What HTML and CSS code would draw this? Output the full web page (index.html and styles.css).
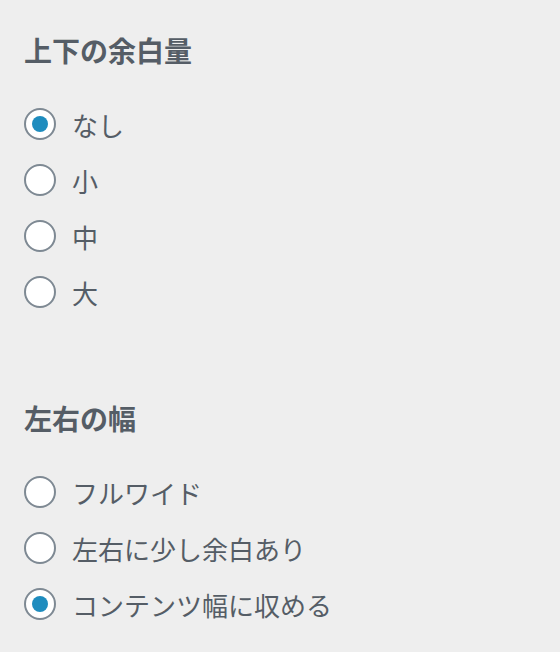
FILE: index.html
```html
<!DOCTYPE html>
<html lang="ja">
<head>
<meta charset="utf-8">
<link rel="stylesheet" href="styles.css">
</head>
<body>
<div class="panel">
  <section class="control">
    <h2 class="control-title">上下の余白量</h2>
    <ul class="choices">
      <li><label class="choice"><input type="radio" name="v" checked><span>なし</span></label></li>
      <li><label class="choice"><input type="radio" name="v"><span>小</span></label></li>
      <li><label class="choice"><input type="radio" name="v"><span>中</span></label></li>
      <li><label class="choice"><input type="radio" name="v"><span>大</span></label></li>
    </ul>
  </section>
  <section class="control">
    <h2 class="control-title">左右の幅</h2>
    <ul class="choices">
      <li><label class="choice"><input type="radio" name="h"><span>フルワイド</span></label></li>
      <li><label class="choice"><input type="radio" name="h"><span>左右に少し余白あり</span></label></li>
      <li><label class="choice"><input type="radio" name="h" checked><span>コンテンツ幅に収める</span></label></li>
    </ul>
  </section>
</div>
</body>
</html>
```
FILE: styles.css
```css
html, body {
  margin: 0;
  padding: 0;
  background: #eeeeee;
}
body {
  font-family: "Noto Sans CJK JP", "Noto Sans", sans-serif;
  color: #555d66;
  width: 560px;
  height: 652px;
  overflow: hidden;
}
.panel {
  padding: 30px 24px 0 24px;
  display: flex;
  flex-direction: column;
  gap: 78px;
}
.control {
  display: flex;
  flex-direction: column;
  gap: 26px;
}
.control-title {
  margin: 0;
  font-size: 28px;
  line-height: 40px;
  font-weight: 700;
  color: #555d66;
}
.choices {
  list-style: none;
  margin: 0;
  padding: 0;
}
.choice {
  display: flex;
  align-items: center;
  gap: 16px;
  height: 56px;
  font-size: 26px;
}
.choice input {
  -webkit-appearance: none;
  appearance: none;
  margin: 0;
  width: 32px;
  height: 32px;
  box-sizing: border-box;
  border: 2px solid #7e8993;
  border-radius: 50%;
  background: #ffffff;
  display: flex;
  align-items: center;
  justify-content: center;
  flex: none;
}
.choice input:checked::before {
  content: "";
  width: 16px;
  height: 16px;
  border-radius: 50%;
  background: #1e8cbe;
}
```
